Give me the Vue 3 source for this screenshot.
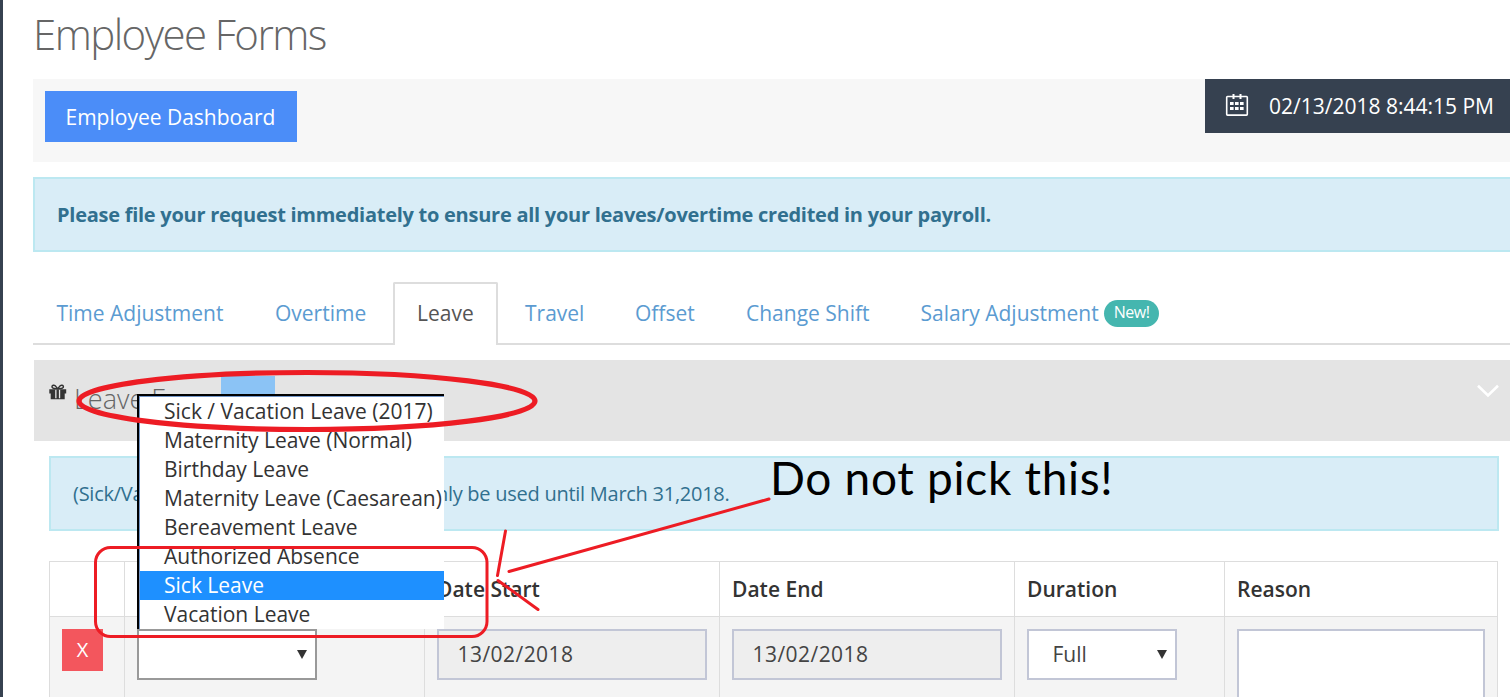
<script setup>
const tabs = [
  { label: 'Time Adjustment', cls: 't-time' },
  { label: 'Overtime', cls: 't-over' },
  { label: 'Leave', cls: 't-leave active' },
  { label: 'Travel', cls: 't-travel' },
  { label: 'Offset', cls: 't-offset' },
  { label: 'Change Shift', cls: 't-shift' },
  { label: 'Salary Adjustment', cls: 't-salary', badge: 'New!' },
]
const options = [
  'Sick / Vacation Leave (2017)',
  'Maternity Leave (Normal)',
  'Birthday Leave',
  'Maternity Leave (Caesarean)',
  'Bereavement Leave',
  'Authorized Absence',
  'Sick Leave',
  'Vacation Leave',
]
const selected = 'Sick Leave'
const dots = [0, 5, 10].flatMap((x) => [0, 5].map((y) => ({ x: 5 + x, y: 9 + y })))
</script>

<template>
  <div class="page">
    <aside class="sidebar"></aside>
    <main class="content">
      <h1><span>Employee Forms</span></h1>
      <div class="toolbar">
        <a class="dash"><span>Employee Dashboard</span></a>
        <div class="clock">
          <svg width="24" height="24" viewBox="0 0 24 24">
            <rect x="1.7" y="3.5" width="20.6" height="18.6" rx="0.8" fill="none" stroke="#fff" stroke-width="1.6" />
            <path d="M8.5 1v5M15.5 1v5" stroke="#fff" stroke-width="2" />
            <rect v-for="(d, i) in dots" :key="i" :x="d.x" :y="d.y" width="3.6" height="3" fill="#fff" />
          </svg>
          <span>02/13/2018 8:44:15 PM</span>
        </div>
      </div>

      <div class="alert top"><b>Please file your request immediately to ensure all your leaves/overtime credited in your payroll.</b></div>

      <nav class="tabs">
        <a v-for="t in tabs" :key="t.label" class="tab" :class="t.cls">
          <span class="tl">{{ t.label }}</span><span v-if="t.badge" class="badge"><span>{{ t.badge }}</span></span>
        </a>
      </nav>

      <section class="portlet">
        <div class="caption">
          <svg class="gift" width="18" height="16" viewBox="0 0 18 16">
            <path d="M8.200 4.700C4 5 2.800 3.700 3 2.500 3.300 1 5.200 .8 6.200 1.800L8.700 4.600 11.200 1.800C12.300 .8 14.100 1 14.400 2.500 14.600 3.700 13.400 5 9.200 4.700" fill="none" stroke="#333" stroke-width="1.400" />
            <path d="M.3 5.200h16.900v4.200H.3zM1.700 9h14v6.300h-14z" fill="#333" />
            <path d="M6.200 5.800h1.300v8.500H6.200zM9.900 5.800h1.300v8.500H9.900z" fill="#e4e4e4" />
          </svg>
          <span>Leave Form</span>
        </div>
        <svg class="chev" width="22" height="14" viewBox="0 0 22 14">
          <path d="M1 1.800l10 9.600 10-9.600" fill="none" stroke="#fff" stroke-width="2.600" />
        </svg>
      </section>

      <div class="alert inner"><span class="lead">(Sick/Vacation Leave (2017))</span><span>can only be used until March 31,2018.</span></div>

      <div class="grid">
        <div class="th"></div>
        <div class="th"></div>
        <div class="th"><span>Date Start</span></div>
        <div class="th"><span>Date End</span></div>
        <div class="th"><span>Duration</span></div>
        <div class="th"><span>Reason</span></div>
        <div class="td"><a class="remove"><span>X</span></a></div>
        <div class="td"><div class="field type"><i class="caret"></i></div></div>
        <div class="td"><div class="field date"><span>13/02/2018</span></div></div>
        <div class="td"><div class="field date"><span>13/02/2018</span></div></div>
        <div class="td"><div class="field full"><span>Full</span><i class="caret"></i></div></div>
        <div class="td"><div class="field reason"></div></div>
      </div>
    </main>

    <div class="selection"></div>
    <div class="menu">
      <div v-for="o in options" :key="o" class="opt" :class="{ on: o === selected }"><span>{{ o }}</span></div>
    </div>
    <svg class="marks" width="1510" height="697" viewBox="0 0 1510 697" fill="none" stroke="#ed1c24">
      <ellipse cx="307" cy="401" rx="228" ry="28.500" stroke-width="5.200" />
      <rect x="95.500" y="547.500" width="391.500" height="89" rx="15" stroke-width="3" />
      <path d="M769 499L509 571.500M505.500 531L497.500 575.500M498 580.500L538 609.500" stroke-width="3" stroke-linecap="round" />
    </svg>
    <div class="note"><span>Do not pick this!</span></div>
  </div>
</template>

<style>
body { overflow: hidden; }
</style>

<style scoped>
* { box-sizing: border-box; }
.page {
  position: relative; display: flex; width: 1510px; height: 697px; overflow: hidden;
  background: #fff; color: #333; font-family: "Open Sans", "Noto Sans", sans-serif; font-size: 21px; line-height: 30px;
  white-space: nowrap;
}
.sidebar { width: 3px; flex: none; background: #364150; }
.content { flex: none; width: 1507px; padding-left: 30px; display: flex; flex-direction: column; }
h1 { flex: none; margin: 0; height: 79px; padding-top: 4px; font-size: 42px; line-height: 60px; font-weight: 300; color: #666; letter-spacing: -1.55px; }
.toolbar { flex: none; height: 83px; background: #f7f7f7; display: flex; justify-content: space-between; align-items: flex-start; }
.dash { margin: 12px 0 0 12px; width: 252px; height: 51px; padding: 11px 0 0 20.5px; background: #4b8df8; color: #fff; }
.clock { width: 305px; height: 54px; background: #364150; color: #fff; padding: 12px 0 0 20px; display: flex; }
.clock svg { flex: none; margin: 2px 20px 0 0; }
.alert { flex: none; height: 75px; background: #d9edf7; border: 2px solid #bce8f1; color: #31708f; padding: 21px 0 0 22px; font-size: 20px; letter-spacing: -.26px; }
.top { margin-top: 15px; border-right: 0; }
.top b { font-weight: 700; }
.tabs { flex: none; margin-top: 30px; height: 63px; border-bottom: 2px solid #ddd; display: flex; }
.tab { flex: none; height: 61px; padding: 16px 0 0 24px; color: #5b9bd1; display: flex; font-weight: 400; }
.tab.active { height: 63px; border: 2px solid #ddd; border-bottom: 0; border-radius: 2px 2px 0 0; background: #fff; color: #555; padding: 14px 0 0 22px; }
.t-time { width: 218px; padding-left: 23.5px; }
.t-over { width: 142px; }
.t-leave { width: 105px; }
.t-travel { width: 113px; padding-left: 27px; }
.t-offset { width: 111px; }
.t-shift { width: 174px; }
.t-salary { width: 270px; padding-left: 24.5px; }
.badge { width: 55px; height: 27px; margin: 2px 0 0 5.5px; border-radius: 14px; background: #45b6af; color: #fff; font-size: 16px; line-height: 25px; text-align: center; font-weight: 400; letter-spacing: -.5px; }
.portlet { flex: none; margin: 15px 0 0 1px; height: 81px; background: #e4e4e4; display: flex; justify-content: space-between; padding: 24px 11px 0 15px; }
.caption { display: flex; font-size: 27px; font-weight: 300; color: #666; line-height: 30px; }
.gift { margin-right: 7px; }
.inner { margin: 15px 11px 0 16px; display: flex; }
.lead { width: 314px; }
.grid { flex: none; margin: 30px 0 0 16px; width: 1449px; border-left: 1px solid #ddd; border-top: 1px solid #ddd; display: grid; grid-template-columns: 75px 300px 295px 295px 210px 273px; grid-template-rows: 55px 140px; }
.th, .td { border-right: 1px solid #ddd; border-bottom: 1px solid #ddd; padding: 12px; }
.th { font-weight: 600; }
.td { background: #f4f4f4; }
.remove { display: block; width: 41px; height: 42px; background: #f3565d; color: #fff; text-align: center; line-height: 42px; font-size: 20px; }
.field { height: 51px; border: 2px solid #c2c6d6; background: #fff; position: relative; padding: 8px 0 0 19px; color: #444; letter-spacing: .45px; }
.type { width: 180px; border-color: #999; }
.date { width: 270px; background: #eee; padding-left: 18.5px; }
.full { width: 150px; padding-left: 23.5px; letter-spacing: 0; }
.reason { width: 248px; height: 100px; }
.caret { position: absolute; right: 8px; top: 19px; border: 5px solid transparent; border-top: 9px solid #333; border-bottom: 0; }
.selection { position: absolute; left: 221px; top: 376px; width: 54px; height: 20px; background: #8bc3f5; }
.menu { position: absolute; left: 137px; top: 394px; width: 307px; height: 235px; background: #fff; border-left: 2px solid #000; border-top: 2px solid #000; box-shadow: inset 1px 1px #7396c8; padding: 1px 0 0 1px; }
.opt { height: 29px; line-height: 29px; padding-left: 24px; color: #333; }
.on { background: #1e90ff; color: #fff; }
.marks { position: absolute; left: 0; top: 0; }
.note { position: absolute; left: 770px; top: 448px; font-family: Lato, sans-serif; font-size: 46px; line-height: 60px; color: #000; letter-spacing: .7px; }
</style>
